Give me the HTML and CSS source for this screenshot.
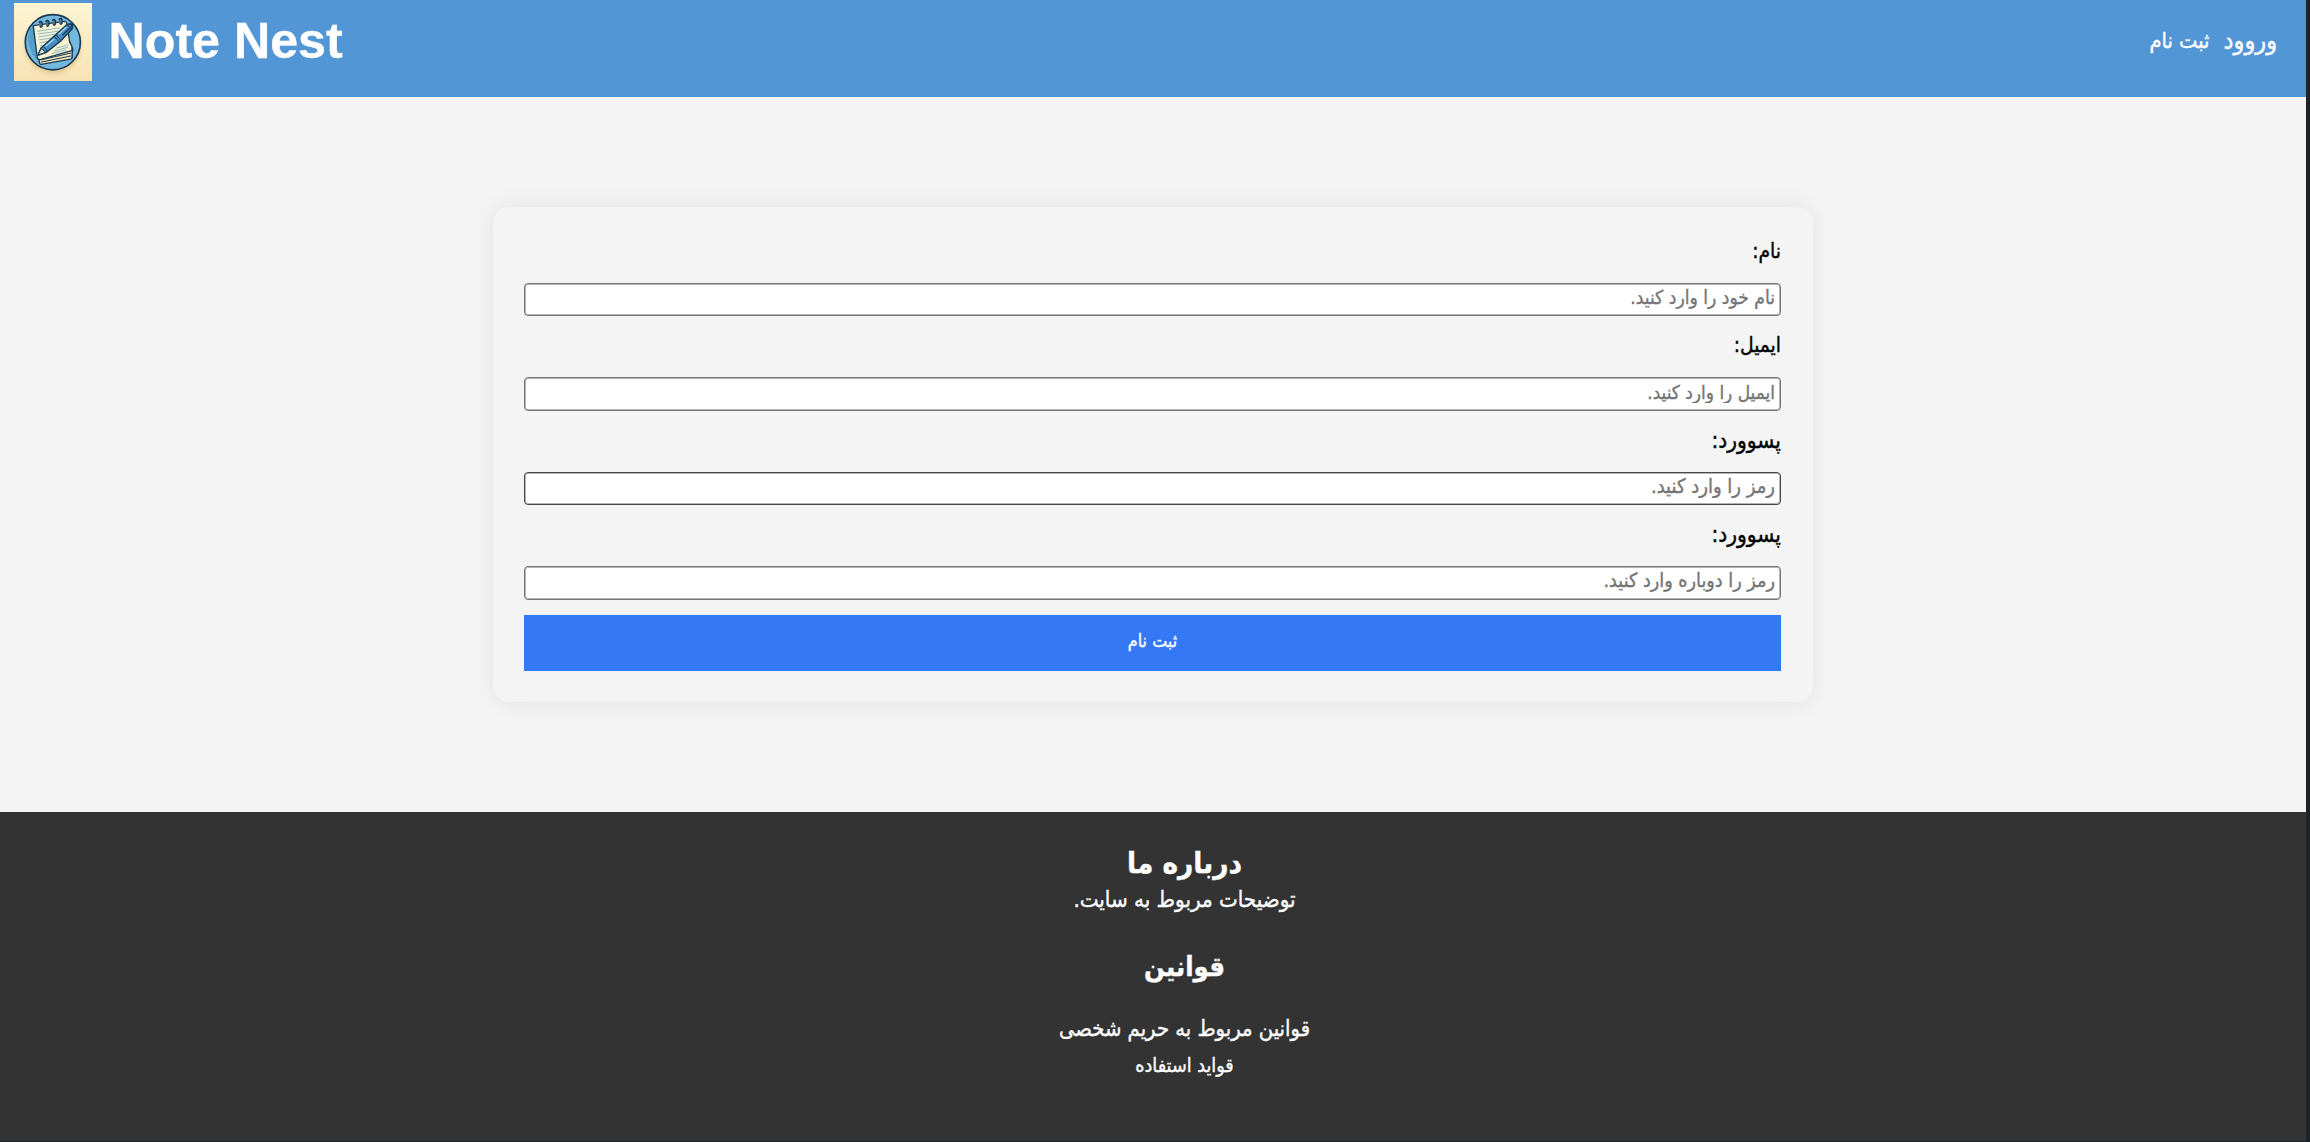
FILE: index.html
```html
<!DOCTYPE html>
<html lang="fa">
<head>
<meta charset="utf-8">
<title>Note Nest</title>
<link rel="stylesheet" href="styles.css">
</head>
<body>
<div class="page">
  <header class="header">
    <div class="brand">
      <svg class="logo" viewBox="11 7 235 236" preserveAspectRatio="none">
        <defs>
          <linearGradient id="paper" x1="0" y1="0" x2="0" y2="1"><stop offset="0" stop-color="#fdf5d3"/><stop offset="1" stop-color="#f8e2b4"/></linearGradient>
          <radialGradient id="shade"><stop offset=".75" stop-color="#c99f60" stop-opacity=".55"/><stop offset="1" stop-color="#e5c48b" stop-opacity="0"/></radialGradient>
        </defs>
        <rect x="11" y="7" width="235" height="236" fill="url(#paper)"/>
        <circle cx="128" cy="136" r="95" fill="url(#shade)"/>
        <circle cx="128" cy="125" r="83" fill="#74b8dc" stroke="#173a56" stroke-width="5"/>
        <path d="M56 88Q45 135 78 178L90 182 70 75Z" fill="#559fca"/>
        <path d="M84 160L88 188Q90 193 97 191L182 176Q189 172 186 162L188 145 170 105Z" fill="#f2e4b6" stroke="#173a56" stroke-width="4"/>
        <path d="M92 185L184 166M93 178L184 157" stroke="#173a56" stroke-width="3" fill="none"/>
        <path d="M69 75L163 62Q169 62 170 68L179 126Q188 137 185 150L90 177Q83 178 81 170Z" fill="#fbf4d2" stroke="#173a56" stroke-width="4" stroke-linejoin="round"/>
        <path d="M80 92l68-10M82 100l62-8M84 109l50-8M85 118l42-6M87 127l31-5M89 136l20-3M137 143l38-10M132 151l42-11M124 159l45-11" stroke="#73afbf" stroke-width="2.5" fill="none"/>
        <path d="M86 66q5-7 10 0v10q-4 8-7 0M106 63q5-7 10 0v10q-4 8-7 0M126 60q5-7 10 0v10q-4 8-7 0M146 57q5-7 10 0v10q-4 8-7 0" fill="#52758a" stroke="#173a56" stroke-width="4"/>
        <path d="M83 164L92 143 139 100 169 73Q178 67 186 74 190 81 183 88L151 122 107 156Z" fill="#458fc5" stroke="#173a56" stroke-width="4.5" stroke-linejoin="round"/>
        <path d="M84 163L93 144 107 155Z" fill="#e2e9e5" stroke="#173a56" stroke-width="3"/>
        <path d="M101 139l11 13M132 107l14 16M137 102l14 16M172 73l11 11" stroke="#173a56" stroke-width="3"/>
        <path d="M105 138l27-23M145 101l24-22" stroke="#a9d8ed" stroke-width="4"/>
        <path d="M157 104l32-31-10-5" fill="none" stroke="#173a56" stroke-width="4"/>
      </svg>
      <h1 class="brand-name">Note Nest</h1>
    </div>
    <nav class="nav" dir="rtl">
      <a class="nav-link nav-login">وروود</a>
      <a class="nav-link">ثبت نام</a>
    </nav>
  </header>
  <main class="main" dir="rtl">
    <form class="card">
      <label class="label" for="name">نام:</label>
      <input class="field field-name" id="name" type="text" placeholder="نام خود را وارد کنید.">
      <label class="label" for="email">ایمیل:</label>
      <input class="field field-email" id="email" type="text" placeholder="ایمیل را وارد کنید.">
      <label class="label label-wide" for="pass">پسوورد:</label>
      <input class="field field-pass" id="pass" type="password" placeholder="رمز را وارد کنید.">
      <label class="label label-wide" for="again">پسوورد:</label>
      <input class="field field-again" id="again" type="password" placeholder="رمز را دوباره وارد کنید.">
      <button class="submit" type="button">ثبت نام</button>
    </form>
  </main>
  <footer class="footer" dir="rtl">
    <h2 class="footer-title">درباره ما</h2>
    <p class="footer-text">توضیحات مربوط به سایت.</p>
    <h2 class="footer-title rules-title">قوانین</h2>
    <ul class="rules">
      <li class="rule">قوانین مربوط به حریم شخصی</li>
      <li class="rule rule-usage">قواید استفاده</li>
    </ul>
  </footer>
</div>
</body>
</html>
```
FILE: styles.css
```css
* { box-sizing: border-box; margin: 0; padding: 0; }
body {
  height: 1142px;
  padding-right: 4px;
  overflow: hidden;
  background: #1d2226;
  font-family: "DejaVu Sans Condensed", "DejaVu Sans", sans-serif;
  -webkit-text-stroke: .35px currentColor;
}
.page { display: flex; flex-direction: column; height: 1141px; background: #f4f4f4; }
.header {
  display: flex;
  justify-content: space-between;
  flex: none;
  height: 97px;
  padding: 0 29px 0 14px;
  background: #5296d5;
  color: #fff;
}
.brand { display: flex; gap: 16.5px; align-items: flex-start; }
.logo { width: 78px; height: 78.5px; margin-top: 2.5px; }
.brand-name { font: bold 50.2px/83px "Liberation Sans", Arial, sans-serif; }
.nav { display: flex; gap: 14px; height: 82px; align-items: center; }
.nav-link { font-size: 21.7px; line-height: 30px; white-space: nowrap; }
.nav-login { font-size: 25px; margin-top: -1px; }
.main { display: flex; justify-content: center; align-items: flex-start; flex: none; height: 715px; padding-top: 110px; }
.card {
  display: flex;
  flex-direction: column;
  width: 1320px;
  height: 495px;
  padding: 31px 32px 31px 31px;
  border-radius: 16px;
  background: #f4f4f4;
  box-shadow: 0 0 24px rgba(0, 0, 0, .08);
}
.label { flex: none; height: 29px; margin-bottom: 16px; font-size: 20.8px; line-height: 27px; color: #000; }
.label-wide { font-size: 22.5px; }
.field {
  flex: none;
  height: 33.4px;
  margin-bottom: 16px;
  padding: 0 5px 4px;
  border: 1px solid #767676;
  border-radius: 4px;
  box-shadow: inset 0 0 0 1px #b4b4b4;
  background: #fff;
  font-family: inherit;
}
.field::placeholder { color: #757575; }
.field-name { font-size: 19.1px; }
.field-email { font-size: 18.9px; }
.field-pass { font-size: 20px; border-color: #484848; }
.field-again { font-size: 19.6px; }
.submit {
  flex: none;
  height: 56px;
  margin-top: -.6px;
  padding-bottom: 4px;
  border: 0;
  background: #3478f6;
  color: #fff;
  font-family: inherit;
  font-size: 17.8px;
  -webkit-text-stroke: .35px currentColor;
}
.footer {
  flex: 1;
  padding: 29px 0 0 63px;
  background: #333;
  color: #fff;
  text-align: center;
}
.footer-title { font-size: 29.4px; line-height: 44px; }
.footer-text { font-size: 22.2px; line-height: 28px; }
.rules-title { margin-top: 32px; font-size: 27.2px; }
.rules { margin-top: 21px; list-style: none; }
.rule { font-size: 21.8px; line-height: 37px; }
.rule-usage { font-size: 19.6px; }
```
